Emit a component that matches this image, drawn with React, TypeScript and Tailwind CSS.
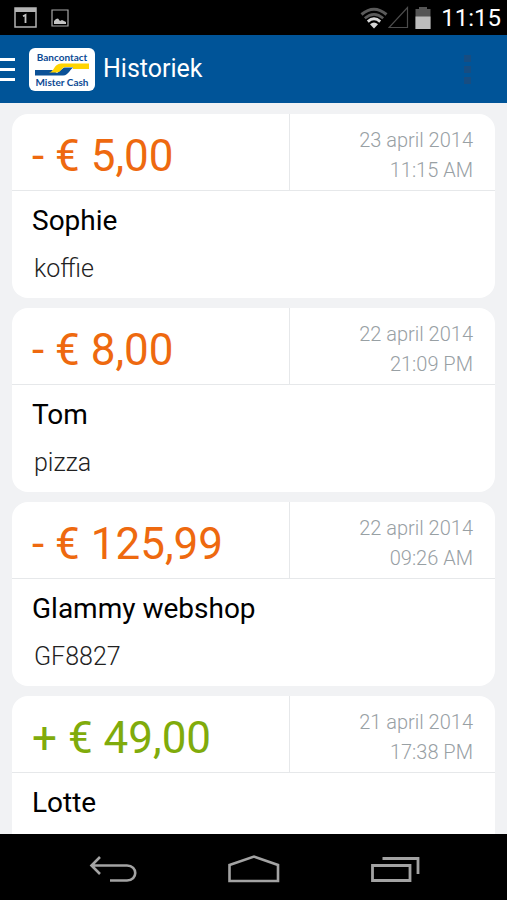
interface Transaction {
  id: number;
  amount: string;
  incoming?: boolean;
  date: string;
  time: string;
  name: string;
  note: string;
}

const transactions: Transaction[] = [
  { id: 1, amount: "- € 5,00", date: "23 april 2014", time: "11:15 AM", name: "Sophie", note: "koffie" },
  { id: 2, amount: "- € 8,00", date: "22 april 2014", time: "21:09 PM", name: "Tom", note: "pizza" },
  { id: 3, amount: "- € 125,99", date: "22 april 2014", time: "09:26 AM", name: "Glammy webshop", note: "GF8827" },
  { id: 4, amount: "+ € 49,00", incoming: true, date: "21 april 2014", time: "17:38 PM", name: "Lotte", note: "" },
];

const StatusBar = () => (
  <div className="flex h-[35px] shrink-0 items-center bg-black pl-3.5 pr-1.5">
    <svg width="23" height="21" viewBox="0 0 23 21" className="mr-3.5">
      <path d="M1 1H22V20H1Z" fill="none" stroke="#b4b4b4" strokeWidth="1.5" />
      <path d="M1 1H22V5H1Z" fill="#b4b4b4" />
      <path d="M9 9.2L11.5 8V16" fill="none" stroke="#c4c4c4" strokeWidth="1.8" />
    </svg>
    <svg width="18" height="18" viewBox="0 0 18 18">
      <path d="M1 1H17V17H1Z" fill="none" stroke="#a8a8a8" strokeWidth="1.2" />
      <path d="M3 15V12L5 10L7 9.5L9 12L11 11L13 12L15 13V15Z" fill="#c4c4c4" />
    </svg>
    <div className="ml-auto flex items-center">
      <svg width="28" height="22" viewBox="0 0 28 22" fill="none">
        <path d="M1.5 7.5Q14 -3 26.5 7.5" stroke="#5a5a5a" strokeWidth="3" />
        <path d="M4.8 11.3Q14 3.5 23.2 11.3" stroke="#5a5a5a" strokeWidth="2.6" />
        <path d="M7.8 14.6Q14 9 20.2 14.6" stroke="#d8d8d8" strokeWidth="2.8" />
        <path d="M10 17.2Q14 13.6 18 17.2L14 21.5Z" fill="#d8d8d8" />
      </svg>
      <svg width="21" height="23" viewBox="0 0 21 23" className="mr-1.5">
        <path d="M19.5 1.5V21.5H1Z" fill="none" stroke="#4c4c4c" strokeWidth="1.2" />
      </svg>
      <svg width="16" height="22" viewBox="0 0 16 22" className="mr-2.5">
        <path d="M4 0H12V2H15.5V22H0.5V2H4Z" fill="#555" />
        <path d="M0.5 9.5H15.5V22H0.5Z" fill="#bdbdbd" />
      </svg>
      <span className="text-[24px] leading-8 text-white">11:15</span>
    </div>
  </div>
);

const Logo = () => (
  <div className="flex h-[43px] w-[66px] flex-col items-center rounded-md bg-white pt-1 font-[Lato,sans-serif] text-[10px] font-bold leading-[10px] text-[#0b4a94]">
    <span>Bancontact</span>
    <svg width="54" height="13" viewBox="0 0 54 13" className="my-px">
      <path d="M0 7H17L22 10L29 4.5H39C35 5 34 12.5 28 12.5H0Z" fill="#0b5197" />
      <path d="M14 9.5C19 9.5 19 0.5 26 0.5H54V6H38V4H31C26 4 27 9.5 21 9.5Z" fill="#ffd400" />
    </svg>
    <span>Mister Cash</span>
  </div>
);

const Header = () => (
  <header className="flex h-[68px] shrink-0 items-center bg-[#005498] pr-6">
    <button type="button" aria-label="Menu" className="mr-3.5 flex flex-col gap-[7px]">
      <span className="h-[3px] w-[15px] bg-white" />
      <span className="h-[3px] w-[15px] bg-white" />
      <span className="h-[3px] w-[15px] bg-white" />
    </button>
    <Logo />
    <h1 className="ml-2 text-[25px] leading-8 text-white">Historiek</h1>
    <button type="button" aria-label="Meer opties" className="ml-auto flex w-8 flex-col items-center gap-1">
      <span className="size-[7px] bg-[#174d82]" />
      <span className="size-[7px] bg-[#174d82]" />
      <span className="size-[7px] bg-[#174d82]" />
    </button>
  </header>
);

const TransactionCard = ({ amount, incoming, date, time, name, note }: Omit<Transaction, "id">) => (
  <li className="h-[184px] shrink-0 rounded-2xl bg-white">
    <div className="flex h-[77px] border-b border-[#e6e8ea]">
      <p className={`flex-1 pl-5 pt-4 text-[44px] leading-[52px] ${incoming ? "text-[#80ab0b]" : "text-[#ee690f]"}`}>
        {amount}
      </p>
      <div className="w-[206px] border-l border-[#e6e8ea] pr-[22px] pt-[11px] text-right text-[20px] font-light leading-[30px] text-[#98a0a4]">
        <p>{date}</p>
        <p>{time}</p>
      </div>
    </div>
    <h2 className="pl-5 pt-3 text-[28px] leading-9 text-black">{name}</h2>
    <p className="pl-[22px] pt-3 text-[25px] font-light leading-9 text-[#222]">{note}</p>
  </li>
);

const NavBar = () => (
  <nav className="flex h-[66px] shrink-0 items-center justify-center gap-[90px] bg-black pt-1">
    <button type="button" aria-label="Terug">
      <svg width="50" height="28" viewBox="0 0 50 28" fill="none" stroke="#a3a3a3" strokeWidth="2.6">
        <path d="M12 2L3.5 10.5L12 19M3.5 10.5H39C50 10.5 50 25.5 39 25.5H22" />
      </svg>
    </button>
    <button type="button" aria-label="Start">
      <svg width="52" height="28" viewBox="0 0 52 28" fill="none" stroke="#a3a3a3" strokeWidth="2.6">
        <path d="M1.5 10L26 1.6L50 10V26H1.5Z" />
      </svg>
    </button>
    <button type="button" aria-label="Recente apps">
      <svg width="50" height="28" viewBox="0 0 50 28" fill="none" stroke="#a3a3a3" strokeWidth="2.8">
        <path d="M2.5 10.5H40V25.5H2.5ZM12.5 3.5H48V19" />
      </svg>
    </button>
  </nav>
);

const App = () => {
  return (
    <div className="flex h-screen flex-col bg-[#f1f2f4] font-[Roboto,sans-serif]">
      <StatusBar />
      <Header />
      <main className="min-h-0 flex-1 overflow-hidden px-3 pt-[11px]">
        <ul className="flex flex-col gap-2.5">
          {transactions.map(({ id, ...transaction }) => (
            <TransactionCard key={id} {...transaction} />
          ))}
        </ul>
      </main>
      <NavBar />
    </div>
  );
};

export default App;
